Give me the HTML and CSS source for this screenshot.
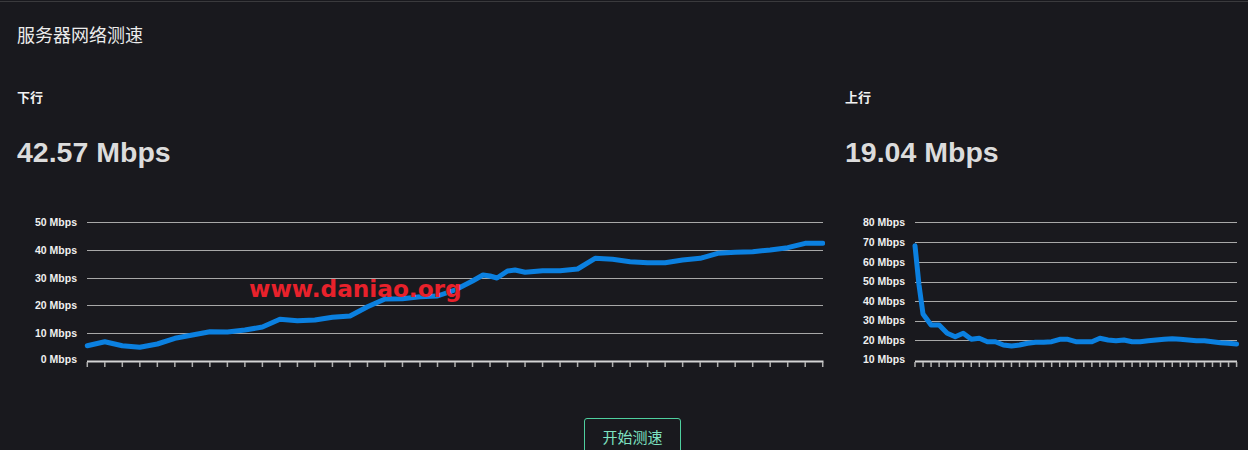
FILE: index.html
```html
<!DOCTYPE html>
<html lang="zh-CN">
<head>
    <meta charset="UTF-8">
    <meta name="viewport" content="width=device-width, initial-scale=1.0">
    <title>服务器网络测速</title>
    <link rel="stylesheet" href="styles.css">
</head>
<body>
    <div class="speed-page">
        <h2 class="page-title">服务器网络测速</h2>

        <div class="panels">
            <div class="panel">
                <h3 class="panel-label">下行</h3>
                <div class="panel-value">42.57 Mbps</div>
                <div class="chart-box">
                    <svg class="chart" width="808" height="170" viewBox="0 0 808 170">
                        <g class="grid">
                            <line x1="70" y1="17.5" x2="806" y2="17.5"/>
                            <line x1="70" y1="45.5" x2="806" y2="45.5"/>
                            <line x1="70" y1="73.5" x2="806" y2="73.5"/>
                            <line x1="70" y1="100.5" x2="806" y2="100.5"/>
                            <line x1="70" y1="128.5" x2="806" y2="128.5"/>
                        </g>
                        <g class="ylabels">
                            <text x="60" y="21">50 Mbps</text>
                            <text x="60" y="48.5">40 Mbps</text>
                            <text x="60" y="76.5">30 Mbps</text>
                            <text x="60" y="104">20 Mbps</text>
                            <text x="60" y="131.5">10 Mbps</text>
                            <text x="60" y="158">0 Mbps</text>
                        </g>
                        <line class="axis" x1="70" y1="156.5" x2="806.5" y2="156.5"/>
                        <path class="ticks" d="M70.3 157v5
                            m17.51-5v5 m17.51-5v5 m17.51-5v5 m17.51-5v5 m17.51-5v5 m17.51-5v5
                            m17.51-5v5 m17.51-5v5 m17.51-5v5 m17.51-5v5 m17.51-5v5 m17.51-5v5
                            m17.51-5v5 m17.51-5v5 m17.51-5v5 m17.51-5v5 m17.51-5v5 m17.51-5v5
                            m17.51-5v5 m17.51-5v5 m17.51-5v5 m17.51-5v5 m17.51-5v5 m17.51-5v5
                            m17.51-5v5 m17.51-5v5 m17.51-5v5 m17.51-5v5 m17.51-5v5 m17.51-5v5
                            m17.51-5v5 m17.51-5v5 m17.51-5v5 m17.51-5v5 m17.51-5v5 m17.51-5v5
                            m17.51-5v5 m17.51-5v5 m17.51-5v5 m17.51-5v5 m17.51-5v5 m17.51-5v5"/>
                        <polyline class="curve" points="70.3,140.7 87.8,136.7 105.3,140.7 122.8,142.3 140.3,139 157.9,133.3 175.4,130 192.9,126.7 210.4,127 227.9,125 245.4,122 262.9,114.3 280.4,115.7 297.9,115 315.4,112.3 333,111 350.5,101.7 368,94 385.5,93.7 403,91.7 420.5,91 438,85 455.5,76 466,70 473,71 480,73 490.5,66 498,65 508.1,67.3 525.6,65.7 543.1,65.7 560.6,64 578.1,53.3 595.6,54.3 613.1,56.7 630.6,57.7 648.1,57.7 665.6,55 683.2,53.3 700.7,48.3 718.2,47.3 735.7,46.7 753.2,45 770.7,42.7 788.2,38.3 805.7,38.3"/>
                    </svg>
                    <span class="watermark">www.daniao.org</span>
                </div>
            </div>

            <div class="panel">
                <h3 class="panel-label">上行</h3>
                <div class="panel-value">19.04 Mbps</div>
                <div class="chart-box">
                    <svg class="chart" width="395" height="170" viewBox="0 0 395 170">
                        <g class="grid">
                            <line x1="70" y1="17.5" x2="392" y2="17.5"/>
                            <line x1="70" y1="37.5" x2="392" y2="37.5"/>
                            <line x1="70" y1="57.5" x2="392" y2="57.5"/>
                            <line x1="70" y1="77.5" x2="392" y2="77.5"/>
                            <line x1="70" y1="96.5" x2="392" y2="96.5"/>
                            <line x1="70" y1="116.5" x2="392" y2="116.5"/>
                            <line x1="70" y1="135.5" x2="392" y2="135.5"/>
                        </g>
                        <g class="ylabels">
                            <text x="60" y="21">80 Mbps</text>
                            <text x="60" y="40.5">70 Mbps</text>
                            <text x="60" y="60.5">60 Mbps</text>
                            <text x="60" y="80">50 Mbps</text>
                            <text x="60" y="99.5">40 Mbps</text>
                            <text x="60" y="119">30 Mbps</text>
                            <text x="60" y="139">20 Mbps</text>
                            <text x="60" y="158">10 Mbps</text>
                        </g>
                        <line class="axis" x1="70" y1="156.5" x2="392" y2="156.5"/>
                        <path class="ticks" d="M70 157v5
                            m8.04-5v5 m8.04-5v5 m8.04-5v5 m8.04-5v5 m8.04-5v5 m8.04-5v5 m8.04-5v5 m8.04-5v5
                            m8.04-5v5 m8.04-5v5 m8.04-5v5 m8.04-5v5 m8.04-5v5 m8.04-5v5 m8.04-5v5 m8.04-5v5
                            m8.04-5v5 m8.04-5v5 m8.04-5v5 m8.04-5v5 m8.04-5v5 m8.04-5v5 m8.04-5v5 m8.04-5v5
                            m8.04-5v5 m8.04-5v5 m8.04-5v5 m8.04-5v5 m8.04-5v5 m8.04-5v5 m8.04-5v5 m8.04-5v5
                            m8.04-5v5 m8.04-5v5 m8.04-5v5 m8.04-5v5 m8.04-5v5 m8.04-5v5 m8.04-5v5 m8.04-5v5"/>
                        <polyline class="curve" points="70,40.7 74,80 78,109 86.1,120 94.1,120 102.2,128.3 110.2,131.7 118.2,128.3 126.3,134.3 134.3,133.3 142.4,136.7 150.4,136.7 158.4,140 166.5,141 174.5,140 182.6,138.3 190.6,137.3 198.6,137.3 206.7,136.7 214.7,134.3 222.8,134.3 230.8,136.7 238.8,136.7 246.9,136.7 254.9,133.3 263,135 271,135.7 279,135 287.1,136.7 295.1,136.7 303.2,135.7 311.2,135 319.2,134.3 327.3,133.7 335.3,134.3 343.4,135 351.4,135.7 359.4,135.7 367.5,136.7 375.5,137.7 383.6,138.3 391.6,139"/>
                    </svg>
                </div>
            </div>
        </div>

        <div class="actions">
            <button class="start-btn">开始测速</button>
        </div>
    </div>
</body>
</html>
```

FILE: styles.css
```css
body {
    margin: 0;
    background: #19191e;
    color: #e6e6e6;
    font-family: "Liberation Sans", Arial, "Noto Sans CJK SC", sans-serif;
}
.speed-page {
    margin-top: 1px;
    border-top: 1px solid #3a3a3d;
    padding-left: 17px;
}
.page-title {
    margin: 22px 0 0;
    font-size: 18px;
    line-height: 24px;
    font-weight: normal;
    color: #ececec;
}
.panels {
    display: grid;
    grid-template-columns: 808px 395px;
    column-gap: 20px;
    margin-top: 41px;
}
.panel-label {
    margin: 0;
    font-size: 13px;
    line-height: 18px;
    font-weight: bold;
    color: #f2f2f2;
}
.panel-value {
    margin-top: 29px;
    font-size: 28.5px;
    line-height: 32px;
    font-weight: bold;
    color: #dcdcdc;
}
.chart-box {
    position: relative;
    margin-top: 37px;
    height: 170px;
}
.chart {
    display: block;
}
.grid line {
    stroke: #a8a8a8;
    stroke-width: 1;
}
.ylabels text {
    fill: #f0f0f0;
    font-size: 10.5px;
    font-weight: bold;
    text-anchor: end;
}
.axis {
    stroke: #d4d4d4;
    stroke-width: 2;
}
.ticks {
    stroke: #b0b0b0;
    stroke-width: 1.5;
    fill: none;
}
.curve {
    fill: none;
    stroke: #0b80e0;
    stroke-width: 5;
    stroke-linejoin: round;
    stroke-linecap: round;
}
.watermark {
    position: absolute;
    left: 232px;
    top: 72px;
    font-family: "DejaVu Sans", sans-serif;
    font-weight: bold;
    font-size: 23.2px;
    line-height: 23.2px;
    color: #e8212b;
    white-space: nowrap;
}
.actions {
    margin-top: 43px;
    text-align: center;
}
.start-btn {
    background: transparent;
    border: 1px solid #4fcf9f;
    border-radius: 3px;
    color: #7fe2c2;
    font-family: "Noto Sans CJK SC", sans-serif;
    font-size: 15px;
    line-height: 20px;
    padding: 8px 17px;
    cursor: pointer;
}
```
